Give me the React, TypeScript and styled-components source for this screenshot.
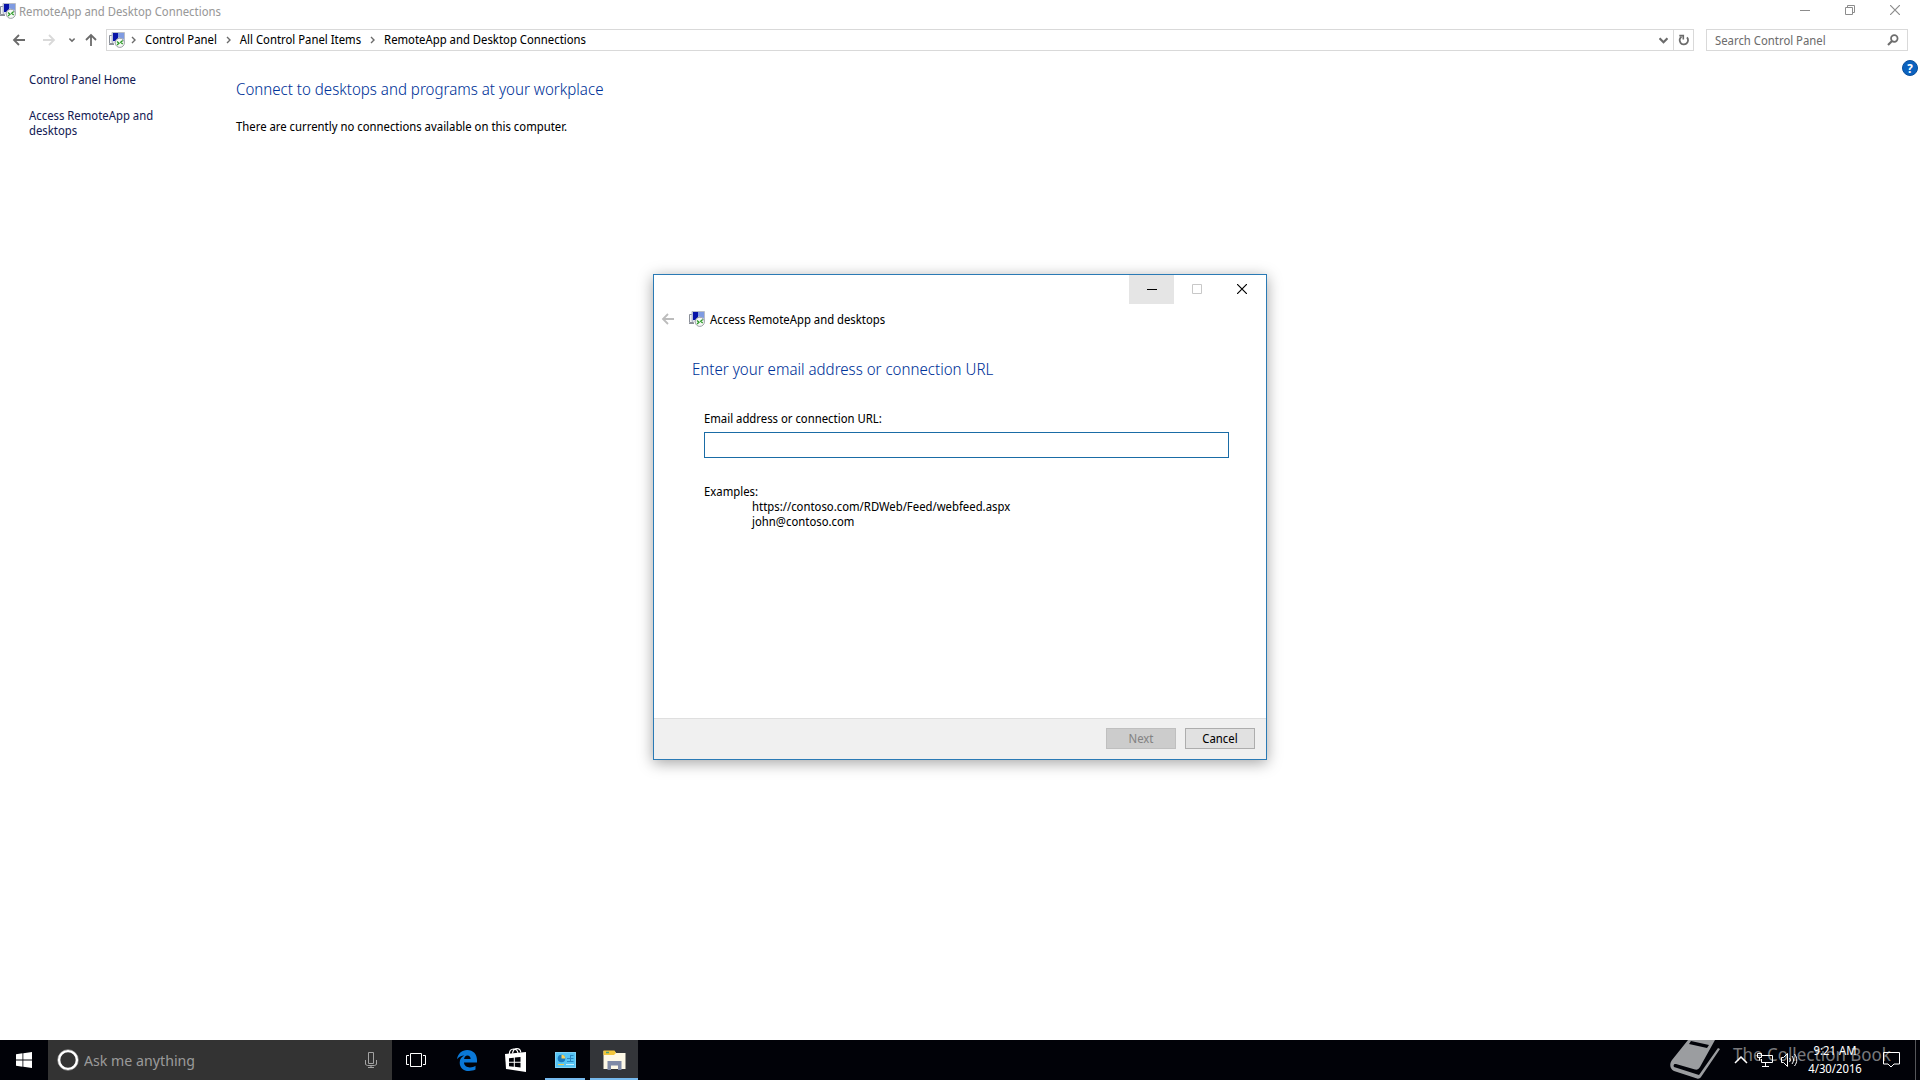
import React from "react";
import styled, { createGlobalStyle } from "styled-components";

const GlobalStyle = createGlobalStyle`
  *, *::before, *::after { box-sizing: border-box; }
  body {
    margin: 0;
    background: #fff;
    color: #000;
    font-family: "Segoe UI", "Noto Sans Display", "Noto Sans", "Open Sans", sans-serif;
    font-size: 12px;
    line-height: 15px;
  }
  button, input { font: inherit; color: inherit; margin: 0; }
  h1, h2, p, ol, ul { margin: 0; padding: 0; font-weight: 400; list-style: none; }
  svg { display: block; flex: none; }
`;

const Desktop = styled.div`
  position: relative;
  display: flex;
  flex-direction: column;
  min-height: 100vh;
`;

const Explorer = styled.main`
  flex: 1;
  display: flex;
  flex-direction: column;
`;

const IconButton = styled.button`
  display: inline-flex;
  align-items: center;
  justify-content: center;
  flex: none;
  padding: 0;
  border: 0;
  background: none;
`;

/* Title bar */

const TitleBar = styled.header`
  display: flex;
  align-items: center;
  gap: 3px;
  height: 22px;
  color: #999;
`;

const WindowTitle = styled.span`
  flex: 1;
`;

const CaptionButton = styled(IconButton)<{ $color: string; $hovered?: boolean; $height: number }>`
  width: 45px;
  height: ${(p) => p.$height}px;
  padding-bottom: 1px;
  color: ${(p) => p.$color};
  background: ${(p) => (p.$hovered ? "#e5e5e5" : "transparent")};
`;

const CaptionGroup = styled.div`
  display: flex;
  align-self: flex-start;
`;

const MainCaptions = styled(CaptionGroup)`
  padding-right: 3px;
`;

/* Navigation row */

const NavRow = styled.nav`
  display: flex;
  align-items: center;
  height: 32px;
  margin-top: 2px;
  padding: 0 12px 0 8px;
`;

const NavButton = styled(IconButton)<{ $width: number; $dim?: boolean }>`
  width: ${(p) => p.$width}px;
  height: 22px;
  color: ${(p) => (p.$dim ? "#d9d9d9" : "#6b6b6b")};
`;

const AddressBar = styled.div`
  flex: 1;
  display: flex;
  align-items: center;
  height: 22px;
  margin-right: 12px;
  padding-left: 2px;
  border: 1px solid #d9d9d9;
`;

const Crumbs = styled.ol`
  flex: 1;
  display: flex;
  align-items: center;
  padding-bottom: 2px;
`;

const Crumb = styled.li`
  display: flex;
  align-items: center;

  & > svg { margin: 2px 9px 0; }
  &:first-child > svg { margin-left: 6px; }
`;

const CrumbLink = styled.a`
  color: #000;
  text-decoration: none;
`;

const RefreshButton = styled(NavButton)`
  border-left: 1px solid #d9d9d9;
`;

const SearchBox = styled.label`
  display: flex;
  align-items: center;
  width: 202px;
  height: 22px;
  padding: 0 8px;
  border: 1px solid #d9d9d9;
  color: #6d6d6d;
`;

const PlainInput = styled.input`
  flex: 1;
  min-width: 0;
  padding: 0;
  border: 0;
  outline: 0;
  background: none;

  &::placeholder { color: inherit; opacity: 1; }
`;

/* Control panel page */

const Page = styled.div`
  flex: 1;
  display: flex;
  align-items: flex-start;
`;

const Sidebar = styled.aside`
  display: flex;
  flex-direction: column;
  gap: 21px;
  width: 236px;
  padding: 16px 70px 0 29px;
`;

const SideLink = styled.a`
  color: #151c55;
  text-decoration: none;
`;

const Content = styled.section`
  flex: 1;
  display: flex;
  flex-direction: column;
  gap: 19px;
  padding-top: 22px;
`;

const Heading = styled.h1`
  && { font-weight: 300; }
  color: #003399;
  font-size: 16px;
  line-height: 22px;
`;

const HelpButton = styled(IconButton)`
  width: 16px;
  height: 16px;
  margin: 4px 2px 0 0;
  border: 1px solid #0a4f9c;
  border-radius: 50%;
  background: #0b62bf;
  color: #fff;
  font-weight: 700;
`;

/* Wizard dialog */

const DialogLayer = styled.div`
  position: absolute;
  inset: 0 0 40px;
  display: flex;
  align-items: center;
  justify-content: center;
  padding-bottom: 6px;
`;

const Dialog = styled.section`
  display: flex;
  flex-direction: column;
  width: 614px;
  min-height: 486px;
  border: 1px solid #2a7ab5;
  background: #fff;
  box-shadow: 0 3px 14px rgba(0, 0, 0, 0.36);
`;

const DialogCaptions = styled(CaptionGroup)`
  align-self: flex-end;
  padding-right: 2px;
`;

const DialogHeader = styled.div`
  display: flex;
  align-items: center;
  gap: 5px;
  height: 30px;
  padding-left: 6px;
`;

const BackButton = styled(NavButton)`
  margin-right: 8px;
  color: #bcbcbc;
`;

const DialogBody = styled.form`
  flex: 1;
  display: flex;
  flex-direction: column;
  padding: 24px 37px 0 50px;
`;

const DialogHeading = styled(Heading)`
  margin-left: -12px;
  margin-bottom: 31px;
`;

const AddressInput = styled.input`
  width: 100%;
  height: 26px;
  margin: 6px 0 26px;
  padding: 0 6px;
  border: 1px solid #1a6ca6;
  border-radius: 0;
  outline: 0;
  background: #fff;
`;

const ExampleList = styled.ul`
  && { padding-left: 48px; }
`;

const DialogFooter = styled.footer`
  display: flex;
  justify-content: flex-end;
  align-items: center;
  gap: 9px;
  height: 41px;
  padding: 0 11px 2px;
  border-top: 1px solid #dfdfdf;
  background: #f0f0f0;
`;

const PushButton = styled.button`
  width: 70px;
  height: 21px;
  padding: 0;
  border: 1px solid #adadad;
  background: #e1e1e1;
  color: #000;

  &:disabled {
    border-color: #bfbfbf;
    background: #cccccc;
    color: #838383;
  }
`;

/* Taskbar */

const Taskbar = styled.footer`
  position: relative;
  display: flex;
  height: 40px;
  background: #010208;
  color: #fff;
`;

const StartButton = styled(IconButton)`
  width: 48px;
`;

const CortanaBox = styled.label`
  display: flex;
  align-items: center;
  gap: 5px;
  width: 344px;
  padding: 0 15px 0 9px;
  background: #333;
  color: #999;
  font-size: 15px;
  line-height: 20px;
`;

const TaskButtons = styled.div`
  display: flex;
  gap: 1px;
`;

const TaskButton = styled(IconButton)<{ $active?: boolean }>`
  width: 48px;
  border-top: 2px solid transparent;
  border-bottom: 2px solid ${(p) => (p.$active ? "#76b9ed" : "transparent")};
  background: ${(p) => (p.$active ? "#333539" : "transparent")};
`;

const TaskViewButton = styled(TaskButton)`
  margin-right: 2px;
`;

const RunningButton = styled(TaskButton)`
  width: 40px;
  margin: 0 4px;
  border-bottom-color: #76b9ed;
`;

const Spacer = styled.div`
  flex: 1;
`;

const Tray = styled.div`
  position: relative;
  display: flex;
  align-items: center;
`;

const TrayButton = styled(IconButton)`
  width: 24px;
  height: 40px;
`;

const Clock = styled.time`
  width: 68px;
  margin-right: 10px;
  line-height: 18px;
  text-align: center;
`;

const ActionCenter = styled(TrayButton)`
  width: 36px;
  padding-right: 12px;
`;

const ShowDesktop = styled(IconButton)`
  width: 5px;
  height: 40px;
  border-left: 1px solid #55565a;
`;

const Watermark = styled.div`
  position: absolute;
  inset: 0 29px 0 auto;
  display: flex;
  align-items: flex-start;
  gap: 12px;
  overflow: hidden;
  color: #77787b;
  font-size: 18px;
  line-height: 28px;
  pointer-events: none;
`;

/* Drawings */

const RemoteIcon = () => (
  <svg width="16" height="16" viewBox="0 0 16 16" aria-hidden="true">
    <path d="M0.500 3.500h4v8h-4z" fill="#f3f4f7" stroke="#8a8f98" />
    <path d="M0 12.500h5" stroke="#8a8f98" />
    <path d="M3 0.500h12.500v10H3z" fill="#b4c1ea" stroke="#b9bdc6" />
    <path d="M4 1h5v8H4z" fill="#0713a8" />
    <path d="M9 1h6v6l-6-2z" fill="#7f9be2" />
    <path d="M4 9h6v2H4z" fill="#dfe3ec" />
    <circle cx="10.800" cy="10.800" r="4.600" fill="#f6f8f5" stroke="#9a9fa3" />
    <path d="M8 9.500l2 1.700-2 1.700M13.700 8.500l-2 1.700 2 1.700" fill="none" stroke="#2c9b28" strokeWidth="1.300" />
  </svg>
);

const Arrow = ({ angle = 0 }: { angle?: number }) => (
  <svg width="14" height="14" viewBox="0 0 14 14" aria-hidden="true">
    <path d="M13 7H2M7 2L2 7l5 5" fill="none" stroke="currentColor" strokeWidth="1.800" transform={`rotate(${angle} 7 7)`} />
  </svg>
);

const ChevronDown = ({ size = 6 }: { size?: number }) => (
  <svg width={size} height={size} viewBox="0 0 8 8" aria-hidden="true">
    <path d="M0.500 2L4 5.500 7.500 2" fill="none" stroke="currentColor" strokeWidth="1.900" />
  </svg>
);

const ChevronRight = () => (
  <svg width="5" height="8" viewBox="0 0 5 8" aria-hidden="true">
    <path d="M1 1l3 3-3 3" fill="none" stroke="#6b6b6b" strokeWidth="1.400" />
  </svg>
);

const RefreshIcon = () => (
  <svg width="12" height="12" viewBox="0 0 12 12" aria-hidden="true">
    <path d="M3.500 2.700A4.200 4.200 0 1 0 9 3.400" fill="none" stroke="currentColor" strokeWidth="1.800" />
    <path d="M1.300 1.600h4v4" fill="none" stroke="currentColor" strokeWidth="1.600" />
  </svg>
);

const SearchIcon = () => (
  <svg width="12" height="12" viewBox="0 0 12 12" aria-hidden="true">
    <circle cx="7.300" cy="4.500" r="3.300" fill="none" stroke="currentColor" strokeWidth="1.700" />
    <path d="M5 7L1 11" stroke="currentColor" strokeWidth="2.200" />
  </svg>
);

const MinimizeIcon = () => (
  <svg width="10" height="10" viewBox="0 0 10 10" aria-hidden="true">
    <path d="M0 5.500h10" stroke="currentColor" />
  </svg>
);

const MaximizeIcon = () => (
  <svg width="10" height="10" viewBox="0 0 10 10" aria-hidden="true">
    <path d="M0.500 0.500h9v9h-9z" fill="none" stroke="currentColor" />
  </svg>
);

const RestoreIcon = () => (
  <svg width="10" height="10" viewBox="0 0 10 10" aria-hidden="true">
    <path d="M0.500 2.500h7v7h-7zM2.500 2.500v-2h7v7h-2" fill="none" stroke="currentColor" />
  </svg>
);

const CloseIcon = () => (
  <svg width="10" height="10" viewBox="0 0 10 10" aria-hidden="true">
    <path d="M0 0l10 10M10 0L0 10" stroke="currentColor" strokeWidth="1.200" />
  </svg>
);

const WindowsLogo = () => (
  <svg width="16" height="16" viewBox="0 0 16 16" fill="#fff" aria-hidden="true">
    <path d="M0 2.200L6.500 1.300V7.600H0zM7.300 1.200L16 0v7.600H7.300zM0 8.400h6.500v6.300L0 13.800zM7.300 8.400H16V16l-8.700-1.200z" />
  </svg>
);

const CortanaRing = () => (
  <svg width="22" height="22" viewBox="0 0 22 22" aria-hidden="true">
    <circle cx="11" cy="11" r="10.300" fill="none" stroke="#8a8a8a" strokeWidth="1" />
    <circle cx="11" cy="11" r="8.900" fill="none" stroke="#fff" strokeWidth="2.400" />
  </svg>
);

const MicIcon = () => (
  <svg width="12" height="18" viewBox="0 0 12 18" fill="none" stroke="#a3a3a3" aria-hidden="true">
    <path d="M3.500 1.500h5v11h-5zM0.500 9v4.500l2 1h7l2-1V9M6 14.500v2.500M3 16.500h6" />
  </svg>
);

const TaskViewIcon = () => (
  <svg width="20" height="14" viewBox="0 0 20 14" fill="none" stroke="#fff" aria-hidden="true">
    <path d="M4.500 0.500h11v13h-11zM3 2.500H0.500v9H3M17 2.500h2.500v9H17" />
  </svg>
);

const EdgeIcon = () => (
  <svg width="20" height="21" viewBox="0 0 20 21" aria-hidden="true">
    <path
      d="M0 9.300C0.800 3.800 4.800 0 10.200 0 16.200 0 20 4.300 20 10.100V12.600H7C7.200 16 10 17.400 12.900 17.400 15 17.400 17 16.800 18.500 15.800V19.600C16.500 20.600 14.300 21 12 21 6.300 21 2.700 17.600 2.700 12.700 2.700 9.500 4.400 6.800 7.300 5.600 4.500 5.600 1.700 7 0 9.300ZM7.100 9H13.600C13.600 6.700 12.400 5.400 10.400 5.400 8.600 5.400 7.300 7 7.100 9Z"
      fill="#0a78d7"
    />
  </svg>
);

const StoreIcon = () => (
  <svg width="22" height="24" viewBox="0 0 22 24" aria-hidden="true">
    <path d="M4.500 6.500C4 3 6 1 8.500 1s4 1.500 4.500 4M7.500 5.500C8 2 10 0.700 12 0.700S15.500 2 15.800 4.500" fill="none" stroke="#fff" strokeWidth="1.200" />
    <path d="M0 6L21 4v20L1 21z" fill="#fff" />
    <path d="M4 10.200l4.800-.5v4H4zM9.800 9.600l5.700-.6v4.700H9.800zM4 14.700h4.800v4L4 18.200zM9.800 14.700h5.700v4.800l-5.700-.7z" fill="#010208" />
  </svg>
);

const ControlPanelIcon = () => (
  <svg width="21" height="16" viewBox="0 0 21 16" aria-hidden="true">
    <rect x="0.500" y="0.500" width="20" height="15" fill="#55c4f4" stroke="#7fd2f6" />
    <circle cx="6.500" cy="6.500" r="3.800" fill="#1a78bd" />
    <path d="M6.500 6.500V2.700A3.800 3.800 0 0 1 10.300 6.500z" fill="#f6cf5a" />
    <path d="M12 6.500h3M12 9.500h3M15 3.500h3.500M15 6.500h3.500M15 9.500h3.500M15.500 3v7" stroke="#2b86c2" />
    <path d="M3 12.500h6" stroke="#f0c94f" />
    <path d="M11 12.500h8" stroke="#c5ecfc" />
  </svg>
);

const ExplorerIcon = () => (
  <svg width="23" height="20" viewBox="0 0 23 20" aria-hidden="true">
    <path d="M0.500 1h11l1.500 2h9.500v16H0.500z" fill="#fdf8e6" />
    <path d="M0.500 0.500h11l1.500 2.500-2 2H0.500z" fill="#f3c63b" />
    <path d="M3 2.500h3" stroke="#4aa07a" strokeWidth="1.500" />
    <path d="M4.500 20v-9h14v9H15v-4.500H8V20z" fill="#7f8aa6" />
  </svg>
);

const TrayChevron = () => (
  <svg width="14" height="8" viewBox="0 0 14 8" aria-hidden="true">
    <path d="M1 7l6-6 6 6" fill="none" stroke="#fff" strokeWidth="1.500" />
  </svg>
);

const NetworkIcon = () => (
  <svg width="16" height="14" viewBox="0 0 16 14" fill="none" stroke="#fff" aria-hidden="true">
    <path d="M5 2.500h10.500v7h-11V6M8.500 9.500v4M5 13.500h7M0.500 0.500h4v4h-4zM2.500 4.500v3" />
  </svg>
);

const SoundIcon = () => (
  <svg width="17" height="14" viewBox="0 0 17 14" fill="none" stroke="#fff" aria-hidden="true">
    <path d="M0.500 4.500h2l4-4v13l-4-4h-2zM8.500 5c1 1.300 1 2.700 0 4M11 3c2 2.600 2 5.400 0 8M13.500 1c3 4 3 8 0 12" />
  </svg>
);

const ActionIcon = () => (
  <svg width="17" height="16" viewBox="0 0 17 16" aria-hidden="true">
    <path d="M0.500 0.500h16v11.500h-5.500l-3 3-3-3H0.500z" fill="none" stroke="#fff" />
  </svg>
);

const BookIcon = () => (
  <svg width="51" height="39" viewBox="0 0 51 39" aria-hidden="true">
    <path d="M18 0H45L30 27C29 29 27 30 25 29.500L6 24C4 23.500 3 25 4 27L29 35 48 8l2 1-19 28C30 38.500 28.500 39 27 38.500L4 31C0 29.500-1 24 2 20z" fill="#9b9da0" />
    <path d="M21 1l18 4-2 3-18-4z" fill="#010208" />
  </svg>
);

const CRUMBS = ["Control Panel", "All Control Panel Items", "RemoteApp and Desktop Connections"];
const EXAMPLES = ["https://contoso.com/RDWeb/Feed/webfeed.aspx", "john@contoso.com"];

export default function App() {
  return (
    <Desktop>
      <GlobalStyle />
      <Explorer>
        <TitleBar>
          <RemoteIcon />
          <WindowTitle>RemoteApp and Desktop Connections</WindowTitle>
          <MainCaptions>
            <CaptionButton $color="#8c8c8c" $height={20} aria-label="Minimize"><MinimizeIcon /></CaptionButton>
            <CaptionButton $color="#8c8c8c" $height={20} aria-label="Restore"><RestoreIcon /></CaptionButton>
            <CaptionButton $color="#8c8c8c" $height={20} aria-label="Close"><CloseIcon /></CaptionButton>
          </MainCaptions>
        </TitleBar>

        <NavRow>
          <NavButton $width={22} aria-label="Back"><Arrow /></NavButton>
          <NavButton $width={38} $dim aria-label="Forward"><Arrow angle={180} /></NavButton>
          <NavButton $width={8} aria-label="Recent locations"><ChevronDown /></NavButton>
          <NavButton $width={30} aria-label="Up"><Arrow angle={90} /></NavButton>
          <AddressBar>
            <RemoteIcon />
            <Crumbs>
              {CRUMBS.map((name) => (
                <Crumb key={name}>
                  <ChevronRight />
                  <CrumbLink href="#">{name}</CrumbLink>
                </Crumb>
              ))}
            </Crumbs>
            <NavButton $width={20} aria-label="Previous locations"><ChevronDown size={9} /></NavButton>
            <RefreshButton $width={20} aria-label="Refresh"><RefreshIcon /></RefreshButton>
          </AddressBar>
          <SearchBox>
            <PlainInput type="text" placeholder="Search Control Panel" aria-label="Search Control Panel" />
            <SearchIcon />
          </SearchBox>
        </NavRow>

        <Page>
          <Sidebar>
            <SideLink href="#">Control Panel Home</SideLink>
            <SideLink href="#">Access RemoteApp and desktops</SideLink>
          </Sidebar>
          <Content>
            <Heading>Connect to desktops and programs at your workplace</Heading>
            <p>There are currently no connections available on this computer.</p>
          </Content>
          <HelpButton aria-label="Help">?</HelpButton>
        </Page>
      </Explorer>

      <DialogLayer>
        <Dialog role="dialog" aria-labelledby="wizard-title">
          <DialogCaptions>
            <CaptionButton $color="#000" $height={29} $hovered aria-label="Minimize"><MinimizeIcon /></CaptionButton>
            <CaptionButton $color="#c8c8c8" $height={29} disabled aria-label="Maximize"><MaximizeIcon /></CaptionButton>
            <CaptionButton $color="#000" $height={29} aria-label="Close"><CloseIcon /></CaptionButton>
          </DialogCaptions>
          <DialogHeader>
            <BackButton $width={16} disabled aria-label="Back"><Arrow /></BackButton>
            <RemoteIcon />
            <span id="wizard-title">Access RemoteApp and desktops</span>
          </DialogHeader>
          <DialogBody id="wizard">
            <DialogHeading as="h2">Enter your email address or connection URL</DialogHeading>
            <label htmlFor="feed-url">Email address or connection URL:</label>
            <AddressInput id="feed-url" type="text" />
            <p>Examples:</p>
            <ExampleList>
              {EXAMPLES.map((text) => <li key={text}>{text}</li>)}
            </ExampleList>
          </DialogBody>
          <DialogFooter>
            <PushButton form="wizard" disabled>Next</PushButton>
            <PushButton type="button">Cancel</PushButton>
          </DialogFooter>
        </Dialog>
      </DialogLayer>

      <Taskbar>
        <StartButton aria-label="Start"><WindowsLogo /></StartButton>
        <CortanaBox>
          <CortanaRing />
          <PlainInput type="text" placeholder="Ask me anything" aria-label="Ask me anything" />
          <MicIcon />
        </CortanaBox>
        <TaskButtons>
          <TaskViewButton aria-label="Task View"><TaskViewIcon /></TaskViewButton>
          <TaskButton aria-label="Microsoft Edge"><EdgeIcon /></TaskButton>
          <TaskButton aria-label="Store"><StoreIcon /></TaskButton>
          <RunningButton aria-label="Control Panel"><ControlPanelIcon /></RunningButton>
          <TaskButton $active aria-label="File Explorer"><ExplorerIcon /></TaskButton>
        </TaskButtons>
        <Spacer />
        <Watermark>
          <BookIcon />
          <span>The Collection Book</span>
        </Watermark>
        <Tray>
          <TrayButton aria-label="Show hidden icons"><TrayChevron /></TrayButton>
          <TrayButton aria-label="Network"><NetworkIcon /></TrayButton>
          <TrayButton aria-label="Volume"><SoundIcon /></TrayButton>
          <Clock>
            9:21 AM<br />4/30/2016
          </Clock>
          <ActionCenter aria-label="Action Center"><ActionIcon /></ActionCenter>
          <ShowDesktop aria-label="Show desktop" />
        </Tray>
      </Taskbar>
    </Desktop>
  );
}
